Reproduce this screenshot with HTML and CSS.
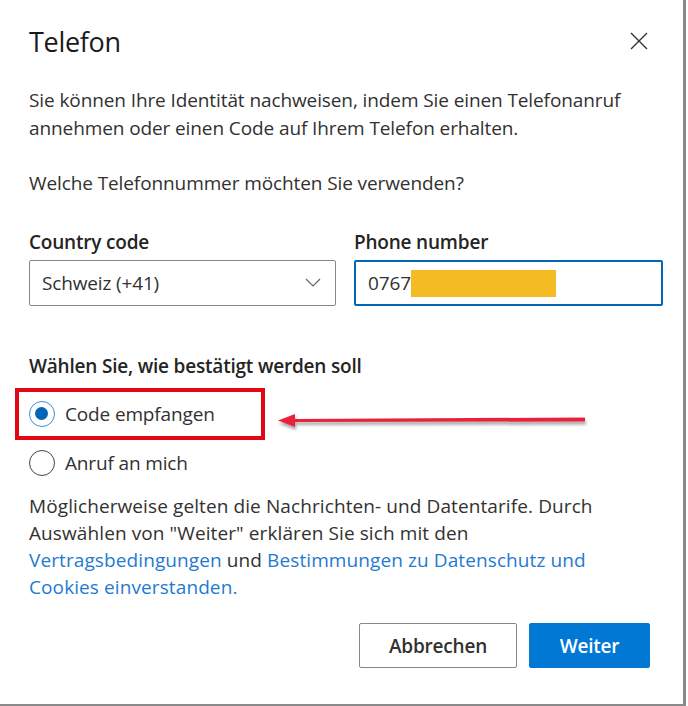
FILE: index.html
```html
<!DOCTYPE html>
<html lang="de">
<head>
<meta charset="utf-8">
<link rel="stylesheet" href="styles.css">
</head>
<body>
<div class="dialog">
  <div class="header">
    <h1 class="title">Telefon</h1>
    <svg class="close" width="20" height="20" viewBox="0 0 20 20"><path d="M2 2 L18 18 M18 2 L2 18" stroke="#333" stroke-width="1.4" fill="none"/></svg>
  </div>
  <p class="text intro">Sie können Ihre Identität nachweisen, indem Sie einen Telefonanruf annehmen oder einen Code auf Ihrem Telefon erhalten.</p>
  <p class="text question">Welche Telefonnummer möchten Sie verwenden?</p>
  <div class="fields">
    <div class="field">
      <div class="label">Country code</div>
      <div class="select">
        <span>Schweiz (+41)</span>
        <svg class="chev" width="16" height="10" viewBox="0 0 16 10"><path d="M1 1 L8 8 L15 1" stroke="#666" stroke-width="1.2" fill="none"/></svg>
      </div>
    </div>
    <div class="field">
      <div class="label">Phone number</div>
      <div class="input"><span>0767</span><span class="redact"></span></div>
    </div>
  </div>
  <div class="label method">Wählen Sie, wie bestätigt werden soll</div>
  <div class="options">
    <div class="highlight">
      <div class="option"><span class="radio checked"></span><span>Code empfangen</span></div>
      <div class="arrow"><svg width="320" height="20" viewBox="0 0 320 20"><defs><filter id="sh" x="-5%" y="-50%" width="110%" height="200%"><feDropShadow dx="1" dy="3" stdDeviation="1.5" flood-color="#000" flood-opacity="0.35"/></filter></defs><g filter="url(#sh)"><path d="M20 8 L310 6.5 L310 10.5 L20 11 Z" fill="#e8233b"/><path d="M3 9.5 L20 3 L20 16 Z" fill="#e8233b"/></g></svg></div>
    </div>
    <div class="option second"><span class="radio"></span><span>Anruf an mich</span></div>
  </div>
  <div class="terms">
    <div class="tline">Möglicherweise gelten die Nachrichten- und Datentarife. Durch</div>
    <div class="tline">Auswählen von "Weiter" erklären Sie sich mit den</div>
    <div class="tline"><a href="#">Vertragsbedingungen</a> und <a href="#">Bestimmungen zu Datenschutz und</a></div>
    <div class="tline"><a href="#">Cookies einverstanden.</a></div>
  </div>
  <div class="buttons">
    <button class="btn secondary">Abbrechen</button>
    <button class="btn primary">Weiter</button>
  </div>
</div>
</body>
</html>
```
FILE: styles.css
```css
html, body { margin: 0; padding: 0; background: #fff; }
body { width: 688px; height: 706px; overflow: hidden; font-family: "Open Sans", "Noto Sans", sans-serif; color: #323130; }
.dialog {
  box-sizing: border-box;
  width: 686px;
  height: 706px;
  border-right: 3px solid #8a8a8a;
  border-bottom: 2px solid #8a8a8a;
  padding: 22px 0 0 29px;
  position: relative;
}
.header { display: flex; justify-content: space-between; align-items: center; padding-right: 34px; }
.title { margin: 0; font-size: 27px; font-weight: 400; line-height: 40px; letter-spacing: -0.3px; color: #1b1a19; }
.close { width: 20px; height: 20px; margin-top: -2px; }
.text { margin: 0; font-size: 19px; line-height: 28px; letter-spacing: -0.1px; width: 620px; }
.intro { margin-top: 24px; }
.question { margin-top: 27px; }
.fields { display: flex; gap: 18px; margin-top: 33px; }
.field { display: flex; flex-direction: column; }
.label { font-size: 19px; font-weight: 600; line-height: 24px; letter-spacing: -0.2px; color: #252423; }
.select, .input {
  box-sizing: border-box;
  height: 46px;
  margin-top: 6px;
  display: flex;
  align-items: center;
  font-size: 19px;
  letter-spacing: -0.15px;
}
.select { width: 307px; border: 1px solid #8a8886; border-radius: 2px; padding: 0 12px; justify-content: space-between; }
.chev { margin-right: 2px; }
.input { width: 309px; border: 2px solid #0067b8; border-radius: 2px; padding: 0 12px; }
.redact { display: inline-block; width: 145px; height: 27px; background: #f4bc22; }
.method { margin-top: 48px; }
.options { margin-top: 10px; margin-left: -14px; }
.highlight {
  box-sizing: border-box;
  width: 250px;
  height: 52px;
  border: 4px solid #e30613;
  display: flex;
  align-items: center;
  padding-left: 10px;
  position: relative;
}
.option { display: flex; align-items: center; gap: 10px; font-size: 19px; letter-spacing: -0.15px; color: #323130; }
.second { padding-left: 14px; margin-top: 10px; }
.radio { box-sizing: border-box; width: 26px; height: 26px; border-radius: 50%; border: 1.5px solid #444; display: inline-block; position: relative; flex: none; }
.radio.checked { border-color: #3a8de0; }
.radio.checked::after { content: ""; position: absolute; left: 5px; top: 5px; width: 13px; height: 13px; border-radius: 50%; background: #0067b8; }
.arrow { position: absolute; left: 256px; top: 19px; line-height: 0; }
.terms { margin-top: 17px; font-size: 19px; line-height: 27px; letter-spacing: 0.1px; }
.tline { white-space: nowrap; }
.terms a { color: #1f7ad0; text-decoration: none; }
.buttons { display: flex; justify-content: flex-end; gap: 12px; margin-top: 22px; padding-right: 33px; }
.btn { box-sizing: border-box; height: 45px; font-family: inherit; font-size: 19px; font-weight: 600; letter-spacing: -0.2px; border-radius: 2px; padding: 0; }
.secondary { width: 158px; background: #fff; border: 1px solid #8a8886; color: #323130; }
.primary { width: 121px; background: #0078d4; border: 1px solid #0078d4; color: #fff; }
```
